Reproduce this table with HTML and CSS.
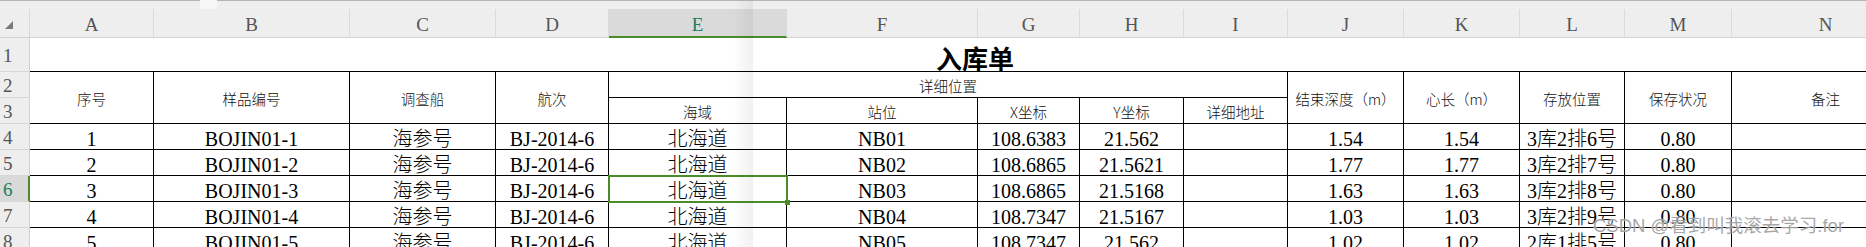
FILE: index.html
```html
<!DOCTYPE html>
<html lang="zh-CN">
<head>
<meta charset="utf-8">
<title>入库单</title>
<link rel="stylesheet" href="styles.css">
</head>
<body>
<div class="page">
  <div class="strip"><span class="seg seg-a"></span><span class="seg gap"></span><span class="seg seg-b"></span></div>
  <div class="sheet">
    <div class="ch corner"><svg width="8" height="8" viewBox="0 0 8 8"><polygon points="8,0 8,8 0,8" fill="#7b7b7b"/></svg></div>
    <div class="ch">A</div><div class="ch">B</div><div class="ch">C</div><div class="ch">D</div>
    <div class="ch on">E</div><div class="ch">F</div><div class="ch">G</div><div class="ch">H</div>
    <div class="ch">I</div><div class="ch">J</div><div class="ch">K</div><div class="ch">L</div>
    <div class="ch">M</div><div class="ch">N</div>

    <div class="rh">1</div>
    <div class="title">入库单</div>

    <div class="rh">2</div>
    <div class="h r2">序号</div>
    <div class="h r2">样品编号</div>
    <div class="h r2">调查船</div>
    <div class="h r2">航次</div>
    <div class="h c5">详细位置</div>
    <div class="h r2">结束深度（m）</div>
    <div class="h r2">心长（m）</div>
    <div class="h r2">存放位置</div>
    <div class="h r2">保存状况</div>
    <div class="h r2">备注</div>

    <div class="rh">3</div>
    <div class="h">海域</div>
    <div class="h">站位</div>
    <div class="h">X坐标</div>
    <div class="h">Y坐标</div>
    <div class="h">详细地址</div>

    <div class="rh">4</div>
    <div class="c">1</div><div class="c">BOJIN01-1</div><div class="c">海参号</div><div class="c">BJ-2014-6</div>
    <div class="c">北海道</div><div class="c">NB01</div><div class="c">108.6383</div><div class="c">21.562</div><div class="c"></div>
    <div class="c">1.54</div><div class="c">1.54</div><div class="c">3库2排6号</div><div class="c">0.80</div><div class="c"></div>

    <div class="rh">5</div>
    <div class="c">2</div><div class="c">BOJIN01-2</div><div class="c">海参号</div><div class="c">BJ-2014-6</div>
    <div class="c">北海道</div><div class="c">NB02</div><div class="c">108.6865</div><div class="c">21.5621</div><div class="c"></div>
    <div class="c">1.77</div><div class="c">1.77</div><div class="c">3库2排7号</div><div class="c">0.80</div><div class="c"></div>

    <div class="rh on">6</div>
    <div class="c">3</div><div class="c">BOJIN01-3</div><div class="c">海参号</div><div class="c">BJ-2014-6</div>
    <div class="c sel">北海道</div><div class="c">NB03</div><div class="c">108.6865</div><div class="c">21.5168</div><div class="c"></div>
    <div class="c">1.63</div><div class="c">1.63</div><div class="c">3库2排8号</div><div class="c">0.80</div><div class="c"></div>

    <div class="rh">7</div>
    <div class="c">4</div><div class="c">BOJIN01-4</div><div class="c">海参号</div><div class="c">BJ-2014-6</div>
    <div class="c">北海道</div><div class="c">NB04</div><div class="c">108.7347</div><div class="c">21.5167</div><div class="c"></div>
    <div class="c">1.03</div><div class="c">1.03</div><div class="c">3库2排9号</div><div class="c">0.80</div><div class="c"></div>

    <div class="rh">8</div>
    <div class="c">5</div><div class="c">BOJIN01-5</div><div class="c">海参号</div><div class="c">BJ-2014-6</div>
    <div class="c">北海道</div><div class="c">NB05</div><div class="c">108.7347</div><div class="c">21.562</div><div class="c"></div>
    <div class="c">1.02</div><div class="c">1.02</div><div class="c">2库1排5号</div><div class="c">0.80</div><div class="c"></div>
  </div>
  <div class="shade"></div>
  <div class="watermark">CSDN @看到叫我滚去学习.for</div>
</div>
</body>
</html>
```

FILE: styles.css
```css
* { box-sizing: border-box; }

html, body {
  margin: 0;
  padding: 0;
  background: #ffffff;
  overflow: hidden;
}

.page {
  position: relative;
  width: 1866px;
  height: 247px;
  overflow: hidden;
  background: #ffffff;
}

.strip {
  display: flex;
  height: 9px;
  background: #efefef;
}

.seg {
  height: 9px;
}

.seg-a {
  width: 200px;
  border-top: 1px solid #b6b6b6;
}

.gap {
  width: 17px;
  background: #f7f7f7;
}

.seg-b {
  flex: 1;
  border-top: 1px solid #b6b6b6;
}

.sheet {
  display: grid;
  grid-template-columns: 30px 124px 196px 146px 113px 178px 191px 102px 104px 104px 116px 116px 105px 107px 188px;
  grid-template-rows: 29px 34px 26px 26px 26px 26px 26px 26px 26px;
  width: 1920px;
}

.ch {
  background: #eeeeee;
  border-right: 1px solid #dadada;
  border-bottom: 1px solid #d2d2d2;
  font-family: "Liberation Serif", serif;
  font-size: 19px;
  line-height: 22px;
  padding-top: 5px;
  color: #555555;
  text-align: center;
}

.ch.on {
  background: #dadada;
  color: #17805e;
  border-bottom: 2px solid #4a8c2a;
}

.corner {
  padding: 12px 0 0 5px;
  text-align: left;
  line-height: 0;
}

.rh {
  background: #eeeeee;
  border-bottom: 1px solid #d8d8d8;
  border-right: 1px solid #d2d2d2;
  font-family: "Liberation Serif", serif;
  font-size: 19px;
  color: #555555;
  padding-left: 3px;
  padding-top: 2px;
  display: flex;
  align-items: center;
}

.rh.on {
  background: #d9d9d9;
  color: #17805e;
  border-right: 2px solid #4a8c2a;
}

.title {
  grid-column: 2 / 16;
  border-bottom: 1px solid #000000;
  display: flex;
  align-items: center;
  justify-content: center;
  padding-top: 5px;
  font-family: "Noto Sans CJK SC", sans-serif;
  font-weight: bold;
  font-size: 26px;
  color: #000000;
}

.h {
  border-right: 1px solid #000000;
  border-bottom: 1px solid #000000;
  display: flex;
  align-items: center;
  justify-content: center;
  padding-top: 2px;
  font-family: "Noto Sans CJK SC", sans-serif;
  font-weight: 300;
  font-size: 14.5px;
  color: #111111;
  white-space: nowrap;
}

.h.r2 {
  grid-row: span 2;
}

.h.c5 {
  grid-column: span 5;
}

.c {
  border-right: 1px solid #000000;
  border-bottom: 1px solid #000000;
  font-family: "Liberation Serif", "Noto Sans CJK SC", serif;
  font-weight: 300;
  font-size: 20px;
  line-height: 20px;
  padding-top: 5px;
  text-align: center;
  white-space: nowrap;
  color: #000000;
}

.c.sel {
  position: relative;
}

.c.sel::before {
  content: "";
  position: absolute;
  top: -1px;
  left: -1px;
  right: -2px;
  bottom: -2px;
  border: 2px solid #4a8c2a;
}

.c.sel::after {
  content: "";
  position: absolute;
  right: -4px;
  bottom: -4px;
  width: 5px;
  height: 5px;
  background: #4a8c2a;
}

.shade {
  position: absolute;
  left: 733px;
  top: 0;
  width: 20px;
  height: 247px;
  background: linear-gradient(to right, rgba(0, 0, 0, 0), rgba(0, 0, 0, 0.06));
  pointer-events: none;
}

.watermark {
  position: absolute;
  left: 1593px;
  top: 215px;
  font-family: "Liberation Sans", "Noto Sans CJK SC", sans-serif;
  font-size: 18.5px;
  line-height: 22px;
  color: rgba(150, 150, 150, 0.85);
  text-shadow: 0 0 2px rgba(255, 255, 255, 0.9);
  white-space: nowrap;
}
```
